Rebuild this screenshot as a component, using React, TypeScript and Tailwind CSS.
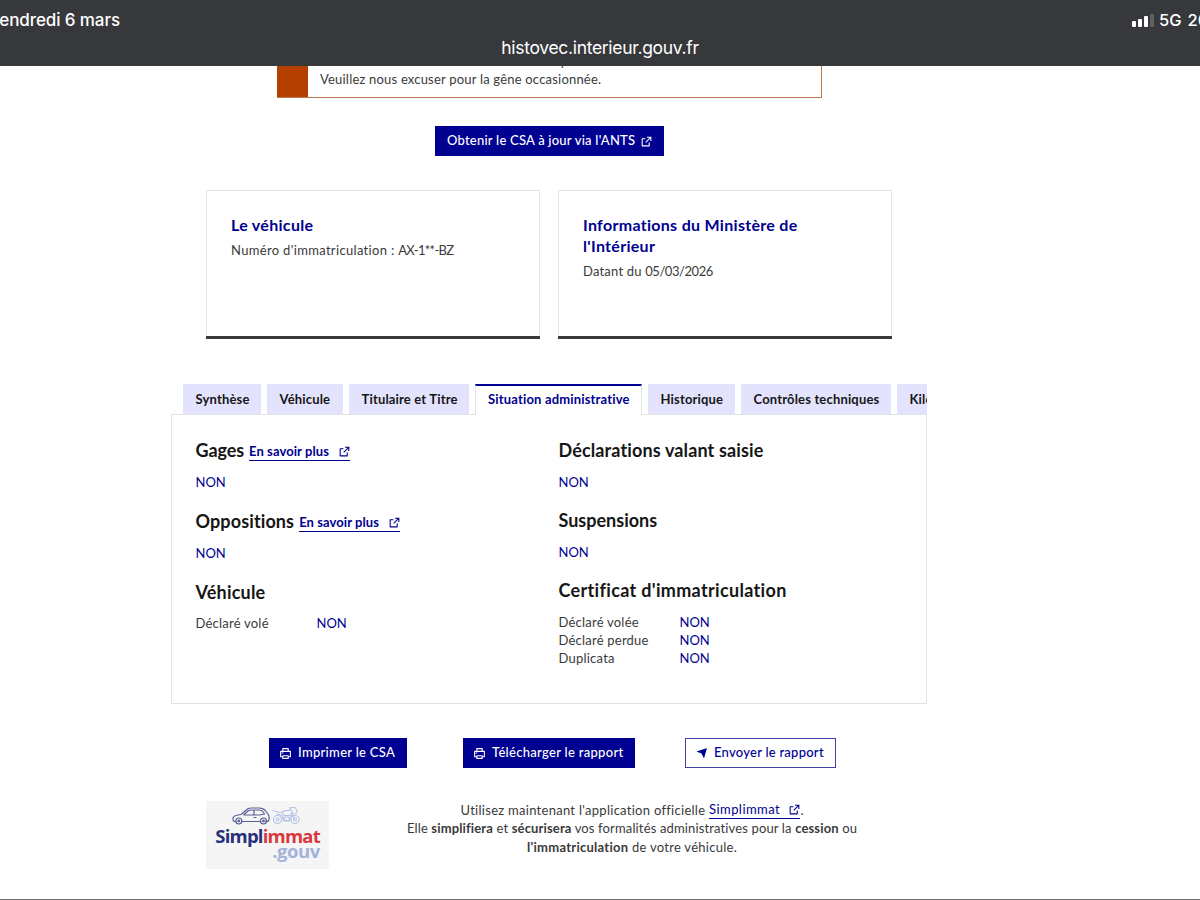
import React from "react";
import { RiPrinterLine } from "react-icons/ri";

function External({ className = "" }: { className?: string }) {
  return (
    <svg viewBox="0 0 24 24" fill="currentColor" className={"h-[13px] w-[13px] shrink-0 " + className}>
      <path d="M10 6v2H5v11h11v-5h2v6a1 1 0 0 1-1 1H4a1 1 0 0 1-1-1V7a1 1 0 0 1 1-1h6Zm11-3v8h-2V6.413l-7.793 7.794-1.414-1.414L17.585 5H13V3h8Z" />
    </svg>
  );
}

function Send() {
  return (
    <svg viewBox="0 0 24 24" fill="currentColor" className="h-3 w-3 shrink-0">
      <path d="M1.923 9.37c-.51-.205-.504-.51.034-.689l19.086-6.362c.529-.176.832.12.684.638l-5.454 19.086c-.15.529-.475.553-.717.07L11 13 1.923 9.37z" />
    </svg>
  );
}

function StatusBar() {
  return (
    <header className="z-10 h-[66px] shrink-0 bg-[#37383c] font-['Inter',sans-serif] text-white">
      <div className="flex h-[38px] items-center justify-between overflow-hidden">
        <div className="-ml-[10px] pt-[2px] text-[17px] leading-5 tracking-[-0.1px] whitespace-nowrap [font-weight:450]">vendredi 6 mars</div>
        <div className="flex w-[68px] items-center pt-[2px] whitespace-nowrap">
          <div className="flex h-[13px] w-[23px] shrink-0 items-end gap-[2px]">
            <span className="h-[6px] w-1 rounded-[1px] bg-white" />
            <span className="h-2 w-1 rounded-[1px] bg-white" />
            <span className="h-[11px] w-1 rounded-[1px] bg-white" />
            <span className="h-[13px] w-1 rounded-[1px] bg-[#606165]" />
          </div>
          <span className="ml-[4px] text-[16.5px] leading-5 [font-weight:450]">5G</span>
          <span className="ml-[6px] text-[16.5px] leading-5 [font-weight:450]">20 %</span>
        </div>
      </div>
      <div className="text-center text-[17.5px] leading-[20px] tracking-[-0.31px]">histovec.interieur.gouv.fr</div>
    </header>
  );
}

function Card({ title, children }: { title: React.ReactNode; children: React.ReactNode }) {
  return (
    <section className="w-[334px]">
      <div className="h-[146px] border border-b-0 border-[#e3e3e3] pt-[23px] pl-6">
        <h2 className="text-[16px] leading-[21px] font-bold tracking-[0.3px] text-[#000091]">{title}</h2>
        <p className="mt-[6px] leading-[18px]">{children}</p>
      </div>
      <div className="h-[3px] bg-[#3a3a3a]" />
    </section>
  );
}

function Tab({ label, className }: { label: string; className: string }) {
  return (
    <div className={"h-[30px] shrink-0 bg-[#e3e3fd] pl-[12.5px] text-[13px] leading-[30px] font-bold tracking-[0.17px] whitespace-nowrap text-[#161616] " + className}>
      {label}
    </div>
  );
}

function More() {
  return (
    <a className="mt-[4px] ml-[5px] flex h-[18px] w-[100.5px] items-center justify-between border-b border-[#000091] text-[13px] font-bold text-[#000091]">
      <span className="tracking-[0.08px]">En savoir plus</span>
      <External className="-mr-[1px]" />
    </a>
  );
}

function Row({ label }: { label: string }) {
  return (
    <div className="flex h-[18.300px] leading-[18px]">
      <span className="w-[121px] tracking-[0.22px]">{label}</span>
      <span className="text-[#000091]">NON</span>
    </div>
  );
}

const h = "text-[18px] leading-6 font-bold text-[#161616] whitespace-nowrap ";
const non = "text-[13px] leading-[18px] text-[#000091] ";

export default function App() {
  return (
    <div className="flex h-[900px] w-[1200px] flex-col overflow-hidden border-b border-[#6b6b6b] bg-white font-['Lato',sans-serif] text-[13px] text-[#3a3a3a]">
      <StatusBar />
      <main className="ml-[171px] flex w-[756px] flex-col">
        <div className="ml-[106px] flex h-8 w-[545px] overflow-hidden border-r border-b border-r-[#bd7650] border-b-[#bd7650]">
          <div className="w-[31px] shrink-0 bg-[#b34000]" />
          <div className="-mt-[14px] ml-3 leading-[18px] whitespace-nowrap">
            <div className="tracking-[0.35px]">Certificat de situation administrative disponible sur le site de l'ANTS.</div>
            <div className="tracking-[0.2px]">Veuillez nous excuser pour la gêne occasionnée.</div>
          </div>
        </div>

        <button className="mt-7 ml-[264px] flex h-[30px] w-[229px] items-center bg-[#000091] pl-3 text-[13px] font-medium whitespace-nowrap text-white">
          <span className="tracking-[0.22px]">Obtenir le CSA à jour via l'ANTS</span>
          <External className="ml-[5px]" />
        </button>

        <div className="mt-[34px] ml-[35px] flex gap-[18px]">
          <Card title="Le véhicule">
            <span className="tracking-[0.33px]">Numéro d'immatriculation : </span>
            <span className="tracking-[-0.7px]">AX-1**-BZ</span>
          </Card>
          <Card title={<>Informations du Ministère de<br />l'Intérieur</>}>
            <span className="tracking-[0.2px]">Datant du </span>
            <span className="tracking-[-0.45px]">05/03/2026</span>
          </Card>
        </div>

        <nav className="z-10 mt-[45px] -mb-px flex h-[31px] gap-[6px] overflow-hidden pl-3">
          <Tab label="Synthèse" className="w-[78px]" />
          <Tab label="Véhicule" className="w-[76px]" />
          <Tab label="Titulaire et Titre" className="w-[120px]" />
          <div className="h-[31px] w-[167px] shrink-0 border-x border-t-2 border-[#e3e3e3] border-t-[#000091] bg-white pl-[12px] text-[13px] leading-[27px] font-bold tracking-[0.17px] whitespace-nowrap text-[#000091]">
            Situation administrative
          </div>
          <Tab label="Historique" className="w-[87px]" />
          <Tab label="Contrôles techniques" className="w-[150px]" />
          <Tab label="Kilométrage" className="w-[100px]" />
        </nav>
        <section className="flex h-[290px] border border-[#e3e3e3] pt-[23px] pl-[23.500px]">
          <div className="w-[363px]">
            <div className="flex h-6 items-center">
              <h3 className={h + "-tracking-[0.1px]"}>Gages</h3>
              <More />
            </div>
            <p className={non + "mt-[11px]"}>NON</p>
            <div className="mt-[18px] flex h-6 items-center">
              <h3 className={h + "tracking-[0.12px]"}>Oppositions</h3>
              <More />
            </div>
            <p className={non + "mt-[11px]"}>NON</p>
            <h3 className={h + "mt-[18px] tracking-[0.2px]"}>Véhicule</h3>
            <div className="mt-[10px]"><Row label="Déclaré volé" /></div>
          </div>
          <div>
            <h3 className={h + "tracking-[0.13px]"}>Déclarations valant saisie</h3>
            <p className={non + "mt-[11px]"}>NON</p>
            <h3 className={h + "mt-[17px]"}>Suspensions</h3>
            <p className={non + "mt-[11px]"}>NON</p>
            <h3 className={h + "mt-[17px] tracking-[0.33px]"}>Certificat d'immatriculation</h3>
            <div className="mt-[10.500px]">
              <Row label="Déclaré volée" />
              <Row label="Déclaré perdue" />
              <Row label="Duplicata" />
            </div>
          </div>
        </section>

        <div className="mt-[34px] ml-[98px] flex h-[30px] text-[13px] font-medium whitespace-nowrap">
          <button className="flex w-[138px] items-center bg-[#000091] pl-[10px] text-white">
            <RiPrinterLine className="mr-[6px] h-[13px] w-[13px] shrink-0" />
            <span className="tracking-[0.3px]">Imprimer le CSA</span>
          </button>
          <button className="ml-[56px] flex w-[172px] items-center bg-[#000091] pl-[10px] text-white">
            <RiPrinterLine className="mr-[6px] h-[13px] w-[13px] shrink-0" />
            <span className="tracking-[0.3px]">Télécharger le rapport</span>
          </button>
          <button className="ml-[50px] flex w-[151px] items-center border border-[#4040a8] pl-[10px] text-[#000091]">
            <Send />
            <span className="ml-[6px] tracking-[0.25px]">Envoyer le rapport</span>
          </button>
        </div>

        <div className="mt-[33px] flex">
          <div className="ml-[35px] h-[68px] w-[123px] shrink-0 bg-[#f5f5f5]">
            <svg viewBox="0 0 123 26" className="block h-[26px] w-[123px]">
              <g fill="none" stroke="#5a6096" strokeWidth="1.2" strokeLinecap="round" strokeLinejoin="round">
                <path d="M29.500 20.500h-1.500c-1-1-1.200-2.500-.8-4 .5-1.500 4-2.500 8-3l5-4.500c1.500-1.500 3-2 5-2h8c3 0 5 1 6.500 3l2.500 3.500c1 1 1 4 .5 6l-1 1h-2" />
                <path d="M36 20.500h18M38 13.500l4-3.500c1-.8 2-1 3.500-1h8c2 0 3.500 1 5 4l-5 1H38M48 9v5M48 16.500h2" />
                <circle cx="32.800" cy="20" r="3" /><circle cx="32.800" cy="20" r=".8" />
                <circle cx="57.500" cy="20" r="3" /><circle cx="57.500" cy="20" r=".8" />
              </g>
              <g fill="none" stroke="#b4c3e4" strokeWidth="1.100" strokeLinecap="round" strokeLinejoin="round">
                <circle cx="71.500" cy="18.500" r="4" /><circle cx="71.500" cy="18.500" r="1.500" />
                <circle cx="89" cy="18.500" r="4" /><circle cx="89" cy="18.500" r="1.500" />
                <path d="M67 9.500l6 2 3-.5c2-1.500 4-2 7-1.500l2-3h4l2 3-1 3-4 .5 3 5M71 13l5 1.500 1.500 5.500h6l2-6M76 11l2 3.500h7l1-4M78 16h5v3.500h-4zM84 6.500l2 4" />
              </g>
            </svg>
            <div className="mr-[9px] text-right font-['Open_Sans',sans-serif] text-[18.500px] leading-[15px] font-bold whitespace-nowrap">
              <div className="pt-[1px] tracking-[-0.78px] text-[#26307c]">Simpl<span className="text-[#d9383c]">immat</span></div>
              <div className="tracking-[-0.4px] text-[#a3b3dc]">.gouv</div>
            </div>
          </div>
          <div className="ml-[77px] w-[452px] shrink-0 text-center leading-[18.300px] whitespace-nowrap">
            <div className="flex justify-center">
              <span className="tracking-[0.28px]">Utilisez maintenant l'application officielle&nbsp;</span>
              <a className="flex h-[18px] w-[91.500px] items-center justify-between border-b border-[#000091] text-[#000091]"><span className="tracking-[0.45px]">Simplimmat</span><External className="-mr-[1px]" /></a>.
            </div>
            <div className="tracking-[0.14px]">Elle <b>simplifiera</b> et <b>sécurisera</b> vos formalités administratives pour la <b>cession</b> ou</div>
            <div className="tracking-[0.27px]"><b>l'immatriculation</b> de votre véhicule.</div>
          </div>
        </div>
      </main>
    </div>
  );
}
